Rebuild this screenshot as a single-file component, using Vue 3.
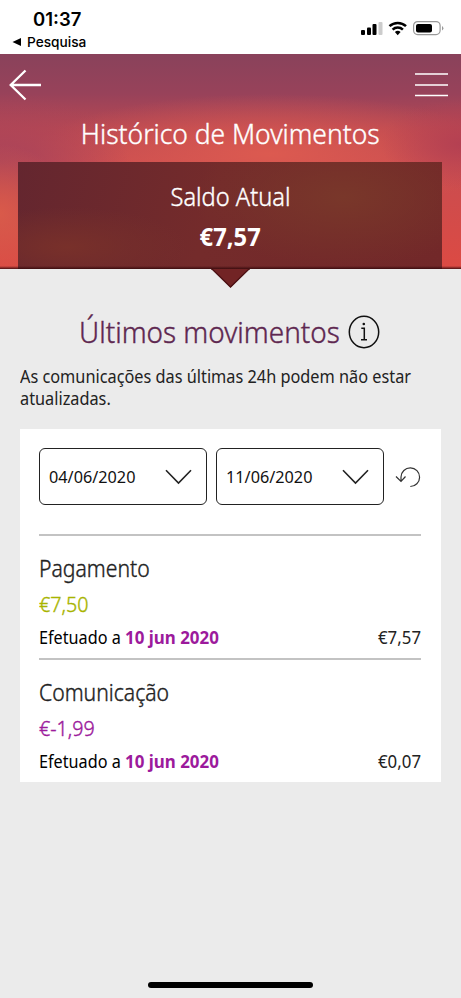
<script setup>
const filters = ['04/06/2020', '11/06/2020']
const movements = [
  { title: 'Pagamento', amount: '€7,50', kind: 'credit', date: '10 jun 2020', balance: '€7,57' },
  { title: 'Comunicação', amount: '€-1,99', kind: 'debit', date: '10 jun 2020', balance: '€0,07' }
]
</script>

<template>
  <div class="screen">
    <header class="status">
      <div class="status-left">
        <span class="time t">01:37</span>
        <span class="back-app"><svg width="10" height="10" viewBox="0 0 10 10"><path d="M0.5 5 9 1v8z" /></svg><span class="t">Pesquisa</span></span>
      </div>
      <svg class="status-icons" width="84" height="18" viewBox="0 0 84 18">
        <rect x="1" y="11" width="4" height="5" rx="1" /><rect x="7" y="8.5" width="4" height="7.5" rx="1" />
        <rect x="12.5" y="5" width="4" height="11" rx="1" /><rect x="18.5" y="3" width="4" height="13" rx="1" fill="#ccc" />
        <g fill="none" stroke="#000" stroke-width="2.5"><path d="M29.5 7.2a12 12 0 0 1 16.5 0" /><path d="M32.6 10.7a7.4 7.4 0 0 1 10.3 0" /></g>
        <path d="M34.9 13.1a4.2 4.2 0 0 1 5.7 0l-2.9 3.2z" />
        <rect x="53.6" y="2.6" width="26.5" height="13" rx="4" fill="none" stroke="#999" stroke-width="1.2" />
        <rect x="56" y="5" width="16" height="8.5" rx="2" /><path d="M82 7v4.5q1.4-.7 1.4-2.25T82 7z" fill="#999" />
      </svg>
    </header>

    <section class="hero">
      <nav class="nav">
        <svg width="34" height="34" viewBox="0 0 34 34"><path d="M17.5 2.5 2.7 17l14.8 14.5M2.7 17H33" fill="none" stroke="#fff" stroke-width="2.3" /></svg>
        <svg width="33" height="26" viewBox="0 0 33 26"><path d="M0 2h33M0 13h33M0 23.5h33" stroke="#fff" stroke-width="1.3" /></svg>
      </nav>
      <h1 class="page-title"><span class="t">Histórico de Movimentos</span></h1>
      <div class="balance">
        <span class="balance-label t">Saldo Atual</span>
        <strong class="balance-value t">€7,57</strong>
      </div>
    </section>

    <main class="content">
      <svg class="notch" width="39" height="20" viewBox="0 0 39 20"><path d="M1 0h37L19.5 18.5z" fill="#722425" /><path d="M0 0h1L19.5 18 38 0h1" fill="none" stroke="#4c1114" stroke-width="1.3" /></svg>
      <h2 class="heading">
        <span class="heading-text t">Últimos movimentos</span>
        <svg width="32" height="34" viewBox="0 0 32 34"><ellipse cx="16" cy="17" rx="14.7" ry="15.7" fill="none" stroke="#111" stroke-width="1.5" /><path d="M13.3 13.2h3v11.3M13 24.7h6" fill="none" stroke="#111" stroke-width="1.5" /><circle cx="15.8" cy="9" r="1.3" fill="#111" /></svg>
      </h2>
      <p class="notice">As comunicações das últimas 24h podem não estar atualizadas.</p>

      <div class="card">
        <div class="filters">
          <button v-for="date in filters" :key="date" class="date">
            <span class="t">{{ date }}</span>
            <svg width="27" height="16" viewBox="0 0 27 16"><path d="M1 1.2 13.5 14 26 1.2" fill="none" stroke="#222" stroke-width="1.6" /></svg>
          </button>
          <svg class="reset" width="26" height="22" viewBox="0 0 26 22"><path d="M6 15.5V11a9.300 9.300 0 1 1 9.300 9.500M1 10.500l5 5 4.500-5" fill="none" stroke="#333" stroke-width="1.200" /></svg>
        </div>
        <article v-for="m in movements" :key="m.title" class="movement">
          <h3 class="name"><span class="t">{{ m.title }}</span></h3>
          <div class="amount" :class="m.kind"><span class="t">{{ m.amount }}</span></div>
          <div class="detail">
            <span class="done t">Efetuado a</span><strong class="when t">{{ m.date }}</strong><span class="rest t">{{ m.balance }}</span>
          </div>
        </article>
      </div>
      <div class="home"></div>
    </main>
  </div>
</template>

<style>
body { background: #ebebeb; }
</style>

<style scoped>
.screen { height: 998px; display: flex; flex-direction: column; overflow: hidden; background: #ebebeb; font-family: "Noto Sans", "Open Sans", sans-serif; color: #222; }
h1, h2, h3, p { margin: 0; font-weight: 400; }
.t { display: inline-block; white-space: nowrap; transform-origin: left center; }
.status { height: 54px; flex: none; display: flex; justify-content: space-between; background: #fff; color: #000; font-family: Inter, sans-serif; box-sizing: border-box; padding: 8px 17px 0 12px; }
.status-left { display: flex; flex-direction: column; }
.time { margin-left: 21px; font-size: 18.5px; line-height: 23px; font-weight: 600; align-self: flex-start; }
.back-app { display: flex; align-items: center; gap: 5px; font-size: 13.7px; font-weight: 500; line-height: 22px; }
.status-icons { margin-top: 11px; }
.hero { height: 215px; flex: none; display: flex; flex-direction: column; color: #fff; background:
  linear-gradient(transparent 212px, #4c1114 215px),
  radial-gradient(ellipse 70px 70px at 0 160px, #d95a4a 0, rgba(217,90,74,0) 100%),
  radial-gradient(ellipse 130px 70px at 0 108px, #a8435a 0, rgba(168,67,90,0) 100%),
  radial-gradient(ellipse 80px 45px at 461px 90px, #b44052 0, rgba(180,64,82,0) 100%),
  radial-gradient(ellipse 240px 60px at 270px 100px, #dc5a50 0, rgba(220,90,80,0) 100%),
  linear-gradient(#89425b 0, #98425a 40px, #b94852 75px, #c94d50 110px, #dc4a43 215px); }
.nav { display: flex; justify-content: space-between; align-items: center; padding: 14px 13px 0 8px; }
.page-title { text-align: center; font-size: 28px; line-height: 38px; margin-top: 12px; }
.page-title .t { font-weight: 300; transform: scaleX(.944); transform-origin: center; -webkit-text-stroke: .4px currentColor; }
.balance { margin: 10px 19px 0 18px; flex: 1; display: flex; flex-direction: column; align-items: center; padding-top: 14px; background:
  linear-gradient(transparent 104px, #3c0c0f 107px),
  radial-gradient(ellipse 150px 70px at 325px 35px, #79372a 0, rgba(121,55,42,0) 100%),
  radial-gradient(ellipse 120px 40px at 50px 85px, #78302a 0, rgba(120,48,42,0) 100%),
  linear-gradient(105deg, #64262f, #742b2b 45%, #722829); }
.balance-label { font-size: 25px; line-height: 40px; font-weight: 300; transform: scaleX(.945); transform-origin: center; -webkit-text-stroke: .4px currentColor; }
.balance-value { font-size: 25px; line-height: 40px; transform: scaleX(.95); transform-origin: center; }
.content { position: relative; flex: 1; display: flex; flex-direction: column; padding: 0 20px; }
.notch { position: absolute; left: 211px; top: 0; }
.heading { display: flex; justify-content: center; align-items: center; gap: 7px; padding-right: 2px; margin-top: 43px; color: #5e2750; font-size: 29px; line-height: 40px; }
.heading-text { font-weight: 300; transform: scaleX(.962); margin-right: -9px; -webkit-text-stroke: .4px currentColor; }
.notice { margin-top: 14px; width: 445px; font-size: 18px; line-height: 21.5px; transform: scaleX(.905); transform-origin: left center; }
.card { margin-top: 20px; background: #fff; padding: 19px 20px 0 19px; }
.filters { display: flex; align-items: center; height: 57px; gap: 9px; margin-bottom: 29px; }
.date { width: 168px; height: 57px; flex: none; box-sizing: border-box; padding: 0 14px 0 9px; border: 1.5px solid #222; border-radius: 6px; background: #fff; display: flex; align-items: center; justify-content: space-between; font: 16.5px "Noto Sans", sans-serif; color: #111; }
.date .t { transform: scaleX(.985); }
.reset { flex: none; margin-left: 2px; }
.movement { border-top: 2px solid #c3c3c3; height: 122px; }
.name { font-size: 23px; line-height: 30px; margin-top: 17px; }
.name .t { font-weight: 300; transform: scaleX(.92); -webkit-text-stroke: .4px currentColor; }
.amount { font-size: 20.5px; line-height: 30px; margin-top: 6px; }
.amount .t { font-weight: 300; transform: scaleX(.96); -webkit-text-stroke: .4px currentColor; }
.credit { color: #a8b400; }
.debit { color: #9c1a9c; }
.detail { display: flex; font-size: 18px; line-height: 26px; margin-top: 5px; color: #000; }
.done { transform: scaleX(.9); margin-right: -5px; }
.when { color: #9c1a9c; transform: scaleX(.94); }
.rest { margin-left: auto; color: #222; transform: scaleX(.935); transform-origin: right center; }
.home { position: absolute; left: 148px; bottom: 10px; width: 165px; height: 6px; border-radius: 3px; background: #000; }
</style>
